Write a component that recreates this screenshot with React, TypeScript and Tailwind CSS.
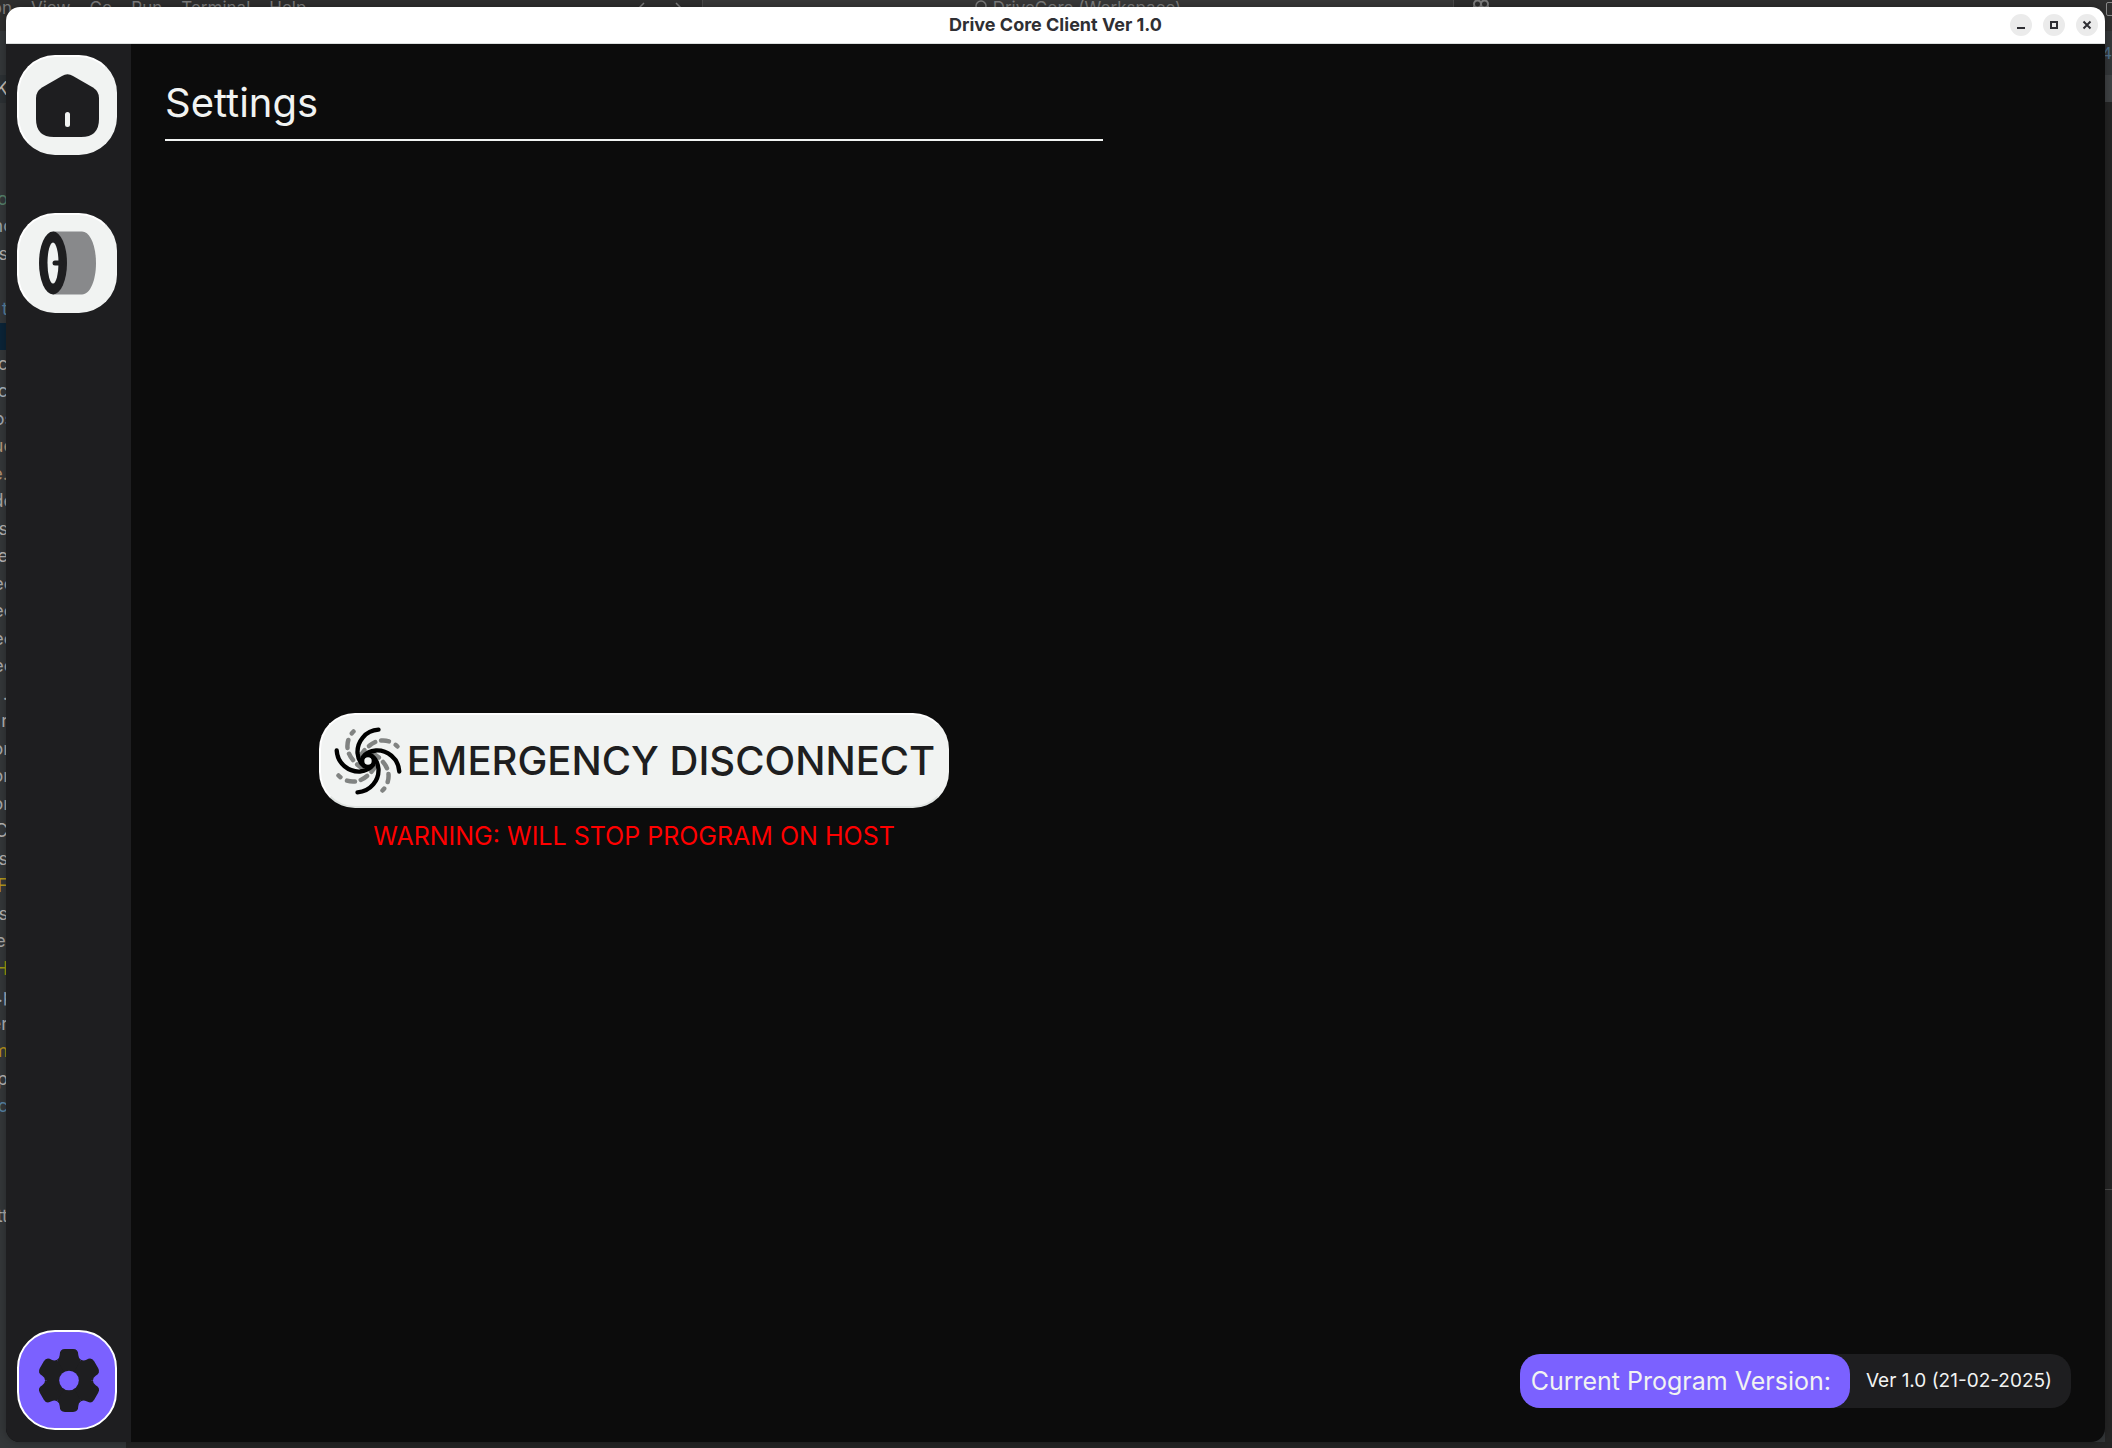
import React from "react";

type Row = { t?: string; c?: string; bg?: string; wide?: boolean };

const code: Row[] = [
  { t: "K", c: "text-[#c5beb5]", bg: "bg-[#2c3134]" }, {}, {}, {},
  { t: "o", c: "text-[#56806a]" },
  { t: "no", c: "text-[#9aa3ab]", wide: true },
  { t: "s", c: "text-[#b5b2b0]" }, {},
  { t: "t", c: "text-[#56809f]" },
  { bg: "bg-[#0b2438]" },
  { t: "c", c: "text-[#b5b0a9]" }, { t: "c", c: "text-[#a5b0b8]" }, { t: "os", c: "text-[#a5a9b0]", wide: true },
  { t: "ue", c: "text-[#b5987a]", wide: true }, { t: "e.", c: "text-[#b08f6f]" }, { t: "de", c: "text-[#a9a5a2]", wide: true },
  { t: "s", c: "text-[#b5b2b0]" }, { t: "e", c: "text-[#b5b2b0]" }, { t: "ec", c: "text-[#a9a9a9]", wide: true },
  { t: "ec", c: "text-[#a9a9a9]", wide: true }, { t: "ec", c: "text-[#a9a9a9]", wide: true }, { t: "ec", c: "text-[#a9a9a9]", wide: true },
  { t: ".", c: "text-[#b5b2b0]" }, { t: "r", c: "text-[#b5b2b0]" }, { t: "on", c: "text-[#a9a9a9]", wide: true },
  { t: "on", c: "text-[#a9a9a9]", wide: true }, { t: "on", c: "text-[#a9a9a9]", wide: true }, { t: "C", c: "text-[#b5b2b0]" },
  { t: "s", c: "text-[#b5b2b0]" }, { t: "F", c: "text-[#b3981c]" }, { t: "s", c: "text-[#b5b2b0]" },
  { t: "e-", c: "text-[#a9a8a6]", wide: true }, { t: "H", c: "text-[#9f9a12]" }, { t: ".p", c: "text-[#9fadc0]", wide: true },
  { t: "er", c: "text-[#a9b0b4]" }, { t: "m", c: "text-[#b3901c]" }, { t: "p", c: "text-[#b5b2b0]" },
  { t: "c", c: "text-[#56809f]" }, {}, {}, {},
  { t: "tt", c: "text-[#a9a8a6]" },
];

function Editor() {
  return (
    <div aria-hidden="true" className="absolute inset-0 flex flex-col overflow-hidden bg-[#343739] text-[#7c7c7c]">
      <div className="flex h-[31px] shrink-0 items-start bg-[#2e2e2e] text-[17px] leading-4">
        <div className="flex w-[702px] shrink-0 gap-[19px]">
          <span className="flex w-3 justify-end">on</span>
          <span>View</span>
          <span>Go</span>
          <span>Run</span>
          <span>Terminal</span>
          <span>Help</span>
          <svg viewBox="0 0 52 14" className="mr-4 ml-auto h-3.5 w-[52px]" fill="none" stroke="currentColor" strokeWidth="1.500">
            <path d="M10 3L3 10L10 17M42 3L49 10L42 17" />
          </svg>
        </div>
        <div className="flex h-full w-[752px] shrink-0 justify-center gap-1.5 border-x border-[#4a4a4a] bg-[#383838]">
          <svg viewBox="0 0 12 14" className="h-3.5 w-3" fill="none" stroke="currentColor" strokeWidth="1.500">
            <circle cx="6" cy="6" r="5" />
          </svg>
          <span>DriveCore (Workspace)</span>
        </div>
        <svg viewBox="0 0 18 14" className="ml-[18px] h-3.5 w-[18px]" fill="none" stroke="currentColor" strokeWidth="2">
          <circle cx="5.500" cy="4" r="3.500" />
          <circle cx="12.500" cy="4" r="3.500" />
          <path d="M2 6V14M16 6V14" />
        </svg>
        <div className="mt-0.5 -mr-2 ml-auto size-3.5 rounded-xs border border-[#8a8a8a]" />
      </div>
      <div className="flex min-h-0 flex-1 justify-between">
        <div className="h-[1199px] w-[126px] pt-11">
          <div className="flex h-full flex-col text-lg">
            {code.map((r, i) => (
              <div key={i} className={`flex flex-1 items-center ${r.bg ?? ""}`}>
                <span className={`flex justify-end leading-5 ${r.wide ? "w-3.5" : "w-2"} ${r.c ?? ""}`}>{r.t}</span>
              </div>
            ))}
          </div>
        </div>
        <div className="flex w-[7px] flex-col bg-[#252525]">
          <div className="flex h-11 items-center justify-end bg-[#343739] text-base text-[#4d6f8c]">14</div>
          <div className="h-[27px] bg-[#3f4244]" />
          <div className="h-[1088px] border-b border-[#4a4a4a]" />
        </div>
      </div>
      <div className="ml-[126px] h-1.5 shrink-0 bg-[#242424]" />
    </div>
  );
}

function HomeIcon() {
  return (
    <svg viewBox="0 0 63 63" className="size-[63px]">
      <path
        d="M26 1.900Q31.500-1.200 37 1.900L57 13.500Q63 17.500 63 24V45Q63 63 45 63H18Q0 63 0 45V24Q0 17.500 6 13.500Z"
        fill="#1e1e20"
      />
      <rect x="29" y="38" width="5" height="15" rx="2.500" fill="#f1f3f2" />
    </svg>
  );
}

function WheelIcon() {
  return (
    <svg viewBox="0 0.500 57 63" className="h-[63px] w-[57px] overflow-visible">
      <path d="M14 0H43C51 0 57 14 57 31.500S51 63 43 63H14Z" fill="#88898b" />
      <ellipse cx="14" cy="31.500" rx="14" ry="31.500" fill="#1e1e20" />
      <ellipse cx="14" cy="31.500" rx="5.500" ry="20.500" fill="#f1f3f2" />
      <path d="M16 31.500H22" stroke="#1e1e20" strokeWidth="5" strokeLinecap="round" />
    </svg>
  );
}

function GearIcon() {
  return (
    <svg viewBox="-33 -31.500 63 63" className="size-[63px] overflow-visible">
      <g fill="#1e1e20">
        <circle r="22" />
        {[0, 60, 120, 180, 240, 300].map((a) => (
          <path
            key={a}
            transform={`rotate(${a})`}
            d="M0 0L-12-20.780Q-9.300-22.300-9.300-25.500Q-9.300-31.400-4-31.400H4Q9.300-31.400 9.300-25.500Q9.300-22.300 12-20.780Z"
          />
        ))}
      </g>
      <circle r="9.800" fill="#7b61ff" />
    </svg>
  );
}

function VortexIcon() {
  return (
    <svg viewBox="-35 -35 70 70" className="size-[70px] shrink-0" fill="none" strokeLinecap="round">
      {[0, 90, 180, 270].map((a) => (
        <path
          key={a}
          transform={`rotate(${a})`}
          d="M29.500-14.500C22-22 10-23 1-15C-3-12-6-8-8-4"
          stroke="#818382"
          strokeWidth="4.500"
          strokeDasharray="2.500 7.500 8 6 7.500 6 12"
        />
      ))}
      {[0, 90, 180, 270].map((a) => (
        <path
          key={a}
          transform={`rotate(${a})`}
          d="M10.500-31.300C-3-30.500-11-19-10.500-8C-10-3-8 2-4 5"
          stroke="#000"
          strokeWidth="4.300"
        />
      ))}
      <circle r="5.700" stroke="#000" strokeWidth="4" />
    </svg>
  );
}

function NavButton({ label, active, children }: { label: string; active?: boolean; children: React.ReactNode }) {
  return (
    <button
      type="button"
      aria-label={label}
      className={`flex size-[100px] items-center justify-center rounded-[38px] border-2 ${
        active ? "border-white bg-[#7b61ff]" : "border-t-white border-r-[#f1f3f2] border-b-[#f1f3f2] border-l-white bg-[#f1f3f2]"
      }`}
    >
      {children}
    </button>
  );
}

function WindowButton({ label, d }: { label: string; d: string }) {
  return (
    <button type="button" aria-label={label} className="flex size-[22px] items-center justify-center rounded-full bg-[#ebebeb]">
      <svg viewBox="0 0 8 8" className="size-2 overflow-visible" fill="none" stroke="#2e2e33" strokeWidth="2">
        <path d={d} />
      </svg>
    </button>
  );
}

export default function App() {
  return (
    <div className="relative flex h-screen pt-[7px] pr-[7px] pb-1.5 pl-1.5 font-['Inter',sans-serif]">
      <Editor />
      <div className="relative flex flex-1 flex-col overflow-hidden rounded-[14px] bg-[#0c0c0c] shadow-[0_0_8px_rgba(0,0,0,0.3)]">
        <header className="grid h-[37px] shrink-0 grid-cols-[1fr_auto_1fr] items-center border-b border-[#dcdfde] bg-white px-[7px]">
          <h1 className="col-start-2 text-lg leading-6 font-bold text-[#2f2f33]">Drive Core Client Ver 1.0</h1>
          <div className="flex justify-end gap-[11px]">
            <WindowButton label="Minimize" d="M0 7H8" />
            <WindowButton label="Maximize" d="M1 1H7V7H1Z" />
            <WindowButton label="Close" d="M0.500 0.500L7.500 7.500M7.500 0.500L0.500 7.500" />
          </div>
        </header>
        <div className="flex min-h-0 flex-1">
          <nav className="flex w-[125px] flex-col bg-[#1e1e20] px-[11px] pt-[11px] pb-3">
            <NavButton label="Home"><HomeIcon /></NavButton>
            <div className="mt-[58px]">
              <NavButton label="Wheel"><WheelIcon /></NavButton>
            </div>
            <div className="mt-auto">
              <NavButton label="Settings" active><GearIcon /></NavButton>
            </div>
          </nav>
          <main className="grid flex-1 grid-cols-2 gap-[30px] p-[34px]">
            <section className="flex flex-col">
              <h2 className="border-b-2 border-[#f1f3f2] pb-[11px] text-[40px] leading-[50px] text-[#f1f3f2]">Settings</h2>
              <div className="flex flex-1 flex-col items-center justify-center pt-4">
                <button
                  type="button"
                  className="flex h-[95px] items-center gap-1 rounded-[36px] border-2 border-t-white border-r-[#f1f3f2] border-b-[#dfe3e1] border-l-white bg-[#f1f3f2] px-3 text-[40px] leading-[48px] font-medium text-[#1e1e20]"
                >
                  <VortexIcon />
                  EMERGENCY DISCONNECT
                </button>
                <p className="mt-3 text-[25px] leading-8 text-[#ff0000]">WARNING: WILL STOP PROGRAM ON HOST</p>
              </div>
            </section>
            <section className="flex items-end justify-end">
              <div className="flex h-[54px] items-center rounded-[20px] bg-[#1e1e20] text-[#f1f3f2]">
                <div className="flex h-full items-center rounded-[20px] bg-[#7b61ff] pr-[19px] pl-[11px] text-[25px] leading-8">
                  Current Program Version:
                </div>
                <div className="pr-[19px] pl-4 text-[19px] leading-6">Ver 1.0 (21-02-2025)</div>
              </div>
            </section>
          </main>
        </div>
      </div>
    </div>
  );
}
